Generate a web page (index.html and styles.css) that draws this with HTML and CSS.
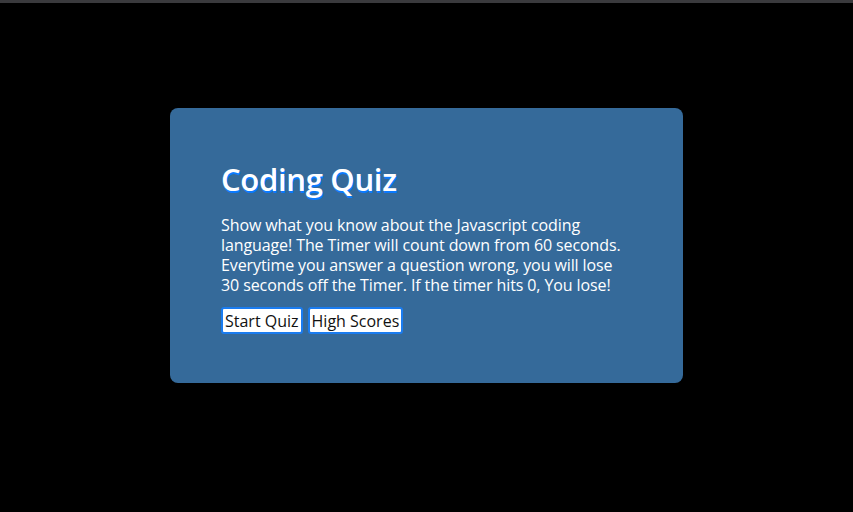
FILE: index.html
```html
<!DOCTYPE html>
<html>
<head>
<meta charset="utf-8">
<link rel="stylesheet" href="styles.css">
</head>
<body>
<div class="topbar"></div>
<main class="stage">
  <section class="card">
    <h1 class="title">Coding Quiz</h1>
    <p class="intro">Show what you know about the Javascript coding<br>language! The Timer will count down from 60 seconds.<br>Everytime you answer a question wrong, you will lose<br>30 seconds off the Timer. If the timer hits 0, You lose!</p>
    <div class="actions">
      <button class="btn">Start Quiz</button>
      <button class="btn">High Scores</button>
    </div>
  </section>
</main>
</body>
</html>
```
FILE: styles.css
```css
html, body {
  margin: 0;
  padding: 0;
  background: #000;
  height: 100%;
}
body {
  font-family: "Open Sans", sans-serif;
}
.topbar {
  height: 3px;
  background: #3a3a3d;
}
.stage {
  display: flex;
  justify-content: center;
  padding-top: 105px;
}
.card {
  box-sizing: border-box;
  width: 513px;
  height: 275px;
  background: #356a9a;
  border-radius: 8px;
  padding: 51px 51px 0 51px;
  color: #fff;
}
.title {
  margin: 0;
  font-size: 31px;
  font-weight: 600;
  line-height: 40px;
  letter-spacing: -0.3px;
  text-shadow: 1px 2px 0 #0a7aff;
}
.intro {
  margin: 16px 0 0 0;
  font-size: 16px;
  line-height: 20px;
  letter-spacing: -0.1px;
  white-space: nowrap;
}
.actions {
  display: flex;
  gap: 5px;
  margin-top: 12px;
}
.btn {
  font-family: inherit;
  font-size: 16px;
  color: #111;
  background: #fff;
  border: 2px solid #1a7cf0;
  border-radius: 3px;
  padding: 0 2px;
  height: 27px;
}
```
